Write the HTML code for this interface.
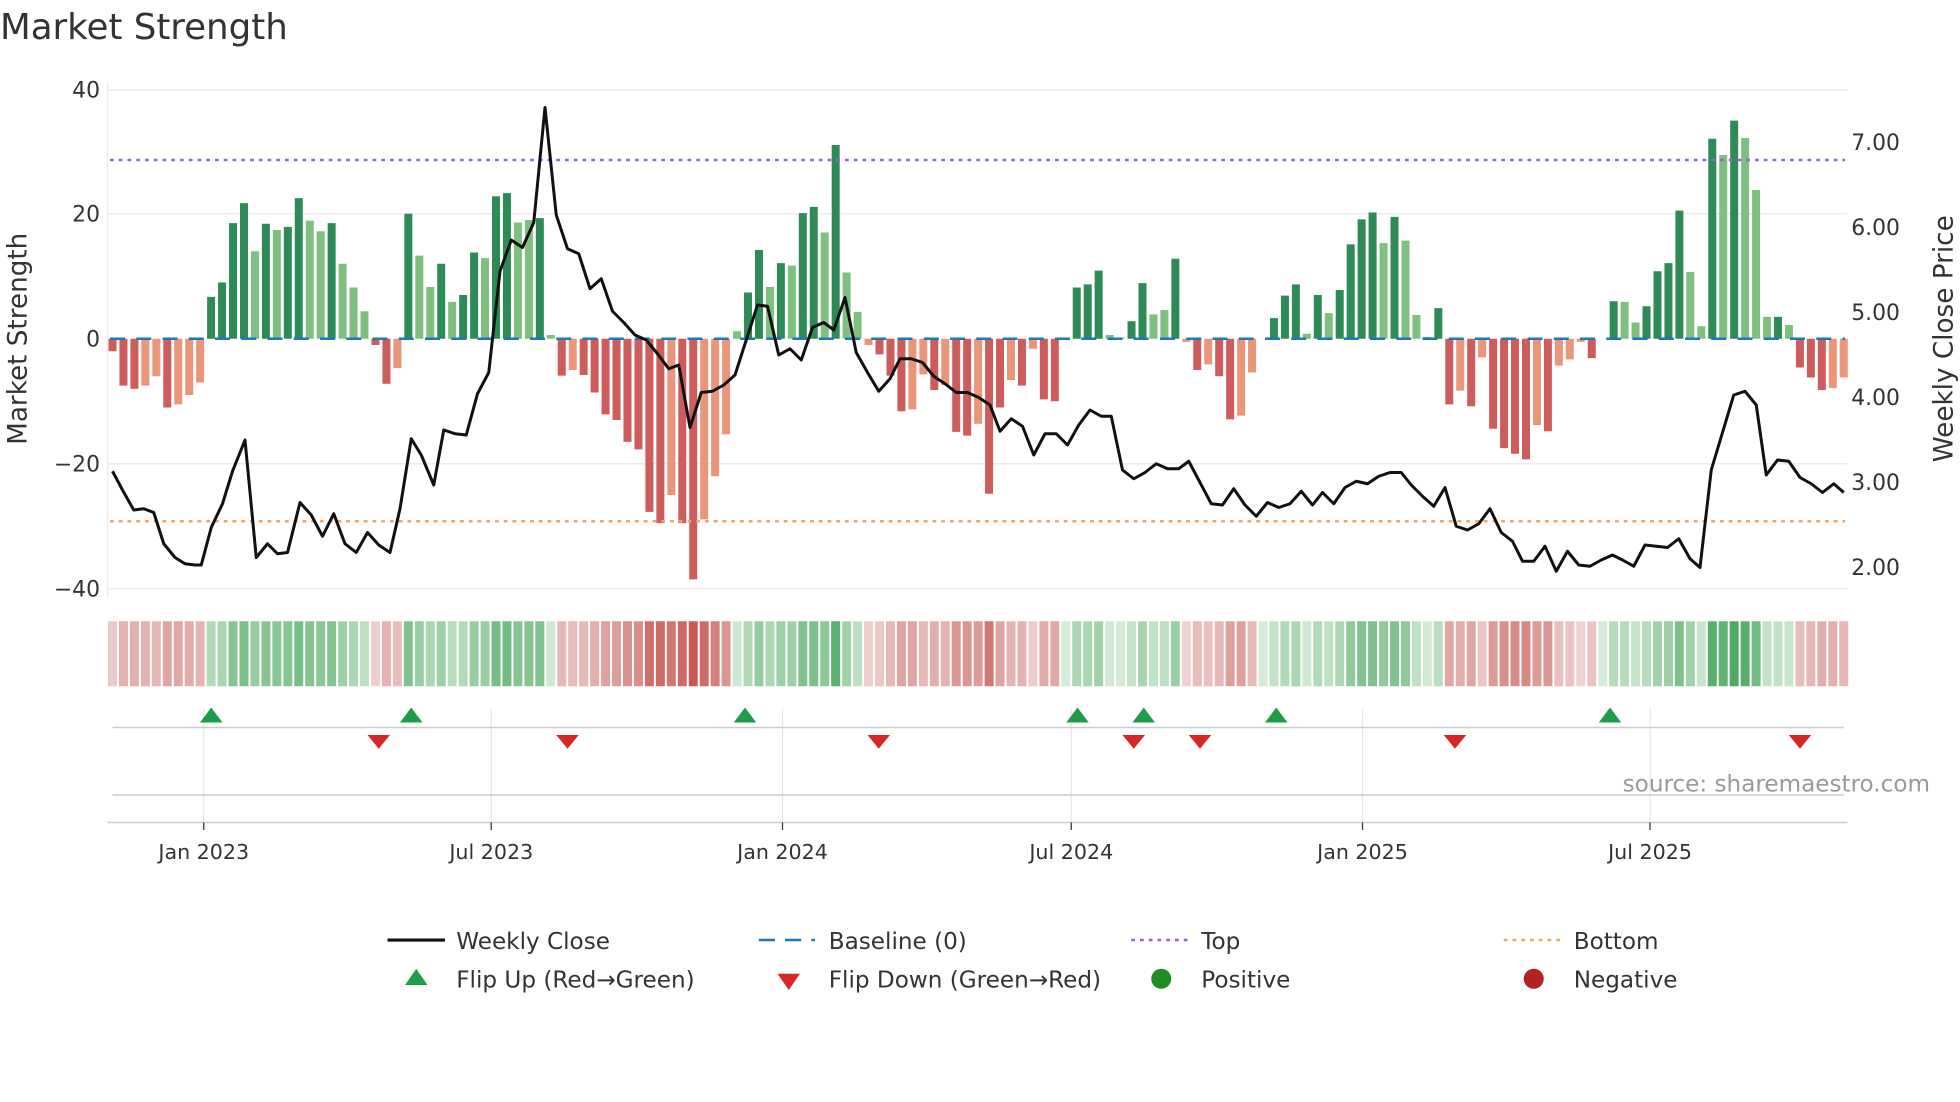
<!DOCTYPE html>
<html><head><meta charset="utf-8"><style>
html,body{margin:0;padding:0;background:#fff;}
svg{display:block;font-family:"DejaVu Sans","Liberation Sans",sans-serif;}
</style></head><body>
<svg id="s" width="1960" height="1102" viewBox="0 0 1568 881.6" xmlns="http://www.w3.org/2000/svg">
<rect width="1568" height="882" fill="#fff"/>
<text x="0" y="31" font-size="28.5" fill="#333">Market Strength</text>
<g stroke="#ececf0" stroke-width="1.2">
<line x1="86" x2="1478" y1="72" y2="72"/><line x1="86" x2="1478" y1="171" y2="171"/>
<line x1="86" x2="1478" y1="371" y2="371"/><line x1="86" x2="1478" y1="471" y2="471"/>
<line x1="86" x2="86" y1="66" y2="478"/>
</g>
<g font-size="17.5" fill="#333" text-anchor="end">
<text x="80" y="78">40</text><text x="80" y="177">20</text><text x="80" y="277">0</text>
<text x="80" y="377">−20</text><text x="80" y="477">−40</text>
</g>
<g font-size="17.5" fill="#333">
<text x="1481" y="120">7.00</text><text x="1481" y="188">6.00</text><text x="1481" y="256">5.00</text>
<text x="1481" y="324">4.00</text><text x="1481" y="392">3.00</text><text x="1481" y="460">2.00</text>
</g>
<text transform="translate(21,271) rotate(-90)" text-anchor="middle" font-size="21" fill="#333">Market Strength</text>
<text transform="translate(1562,271) rotate(-90)" text-anchor="middle" font-size="21" fill="#333">Weekly Close Price</text>
<g id="bars"></g>
<line x1="88" x2="1476" y1="271" y2="271" stroke="#1f77b4" stroke-width="2" stroke-dasharray="12,9"/>
<line x1="88" x2="1476" y1="128" y2="128" stroke="#9b5fd6" stroke-width="2" stroke-dasharray="3,4"/>
<line x1="88" x2="1476" y1="417" y2="417" stroke="#f4a460" stroke-width="2" stroke-dasharray="3,4"/>
<polyline id="price" fill="none" stroke="#111" stroke-width="2.4" stroke-linejoin="round"/>
<g id="heat"></g>
<g stroke="#e6e6e6" stroke-width="1">
<line x1="163" x2="163" y1="567" y2="660"/><line x1="393" x2="393" y1="567" y2="660"/>
<line x1="626" x2="626" y1="567" y2="660"/><line x1="857" x2="857" y1="567" y2="660"/>
<line x1="1090" x2="1090" y1="567" y2="660"/><line x1="1320" x2="1320" y1="567" y2="660"/>
</g>
<line x1="90" x2="1475" y1="582" y2="582" stroke="#ccc" stroke-width="1.2"/>
<line x1="90" x2="1475" y1="636" y2="636" stroke="#ccc" stroke-width="1.2"/>
<line x1="86" x2="1478" y1="658" y2="658" stroke="#ccc" stroke-width="1.2"/>
<g id="flips"></g>
<text x="1544" y="633" text-anchor="end" font-size="18.5" fill="#999">source: sharemaestro.com</text>
<g stroke="#333" stroke-width="1">
<line x1="163" x2="163" y1="658" y2="664"/><line x1="393" x2="393" y1="658" y2="664"/>
<line x1="626" x2="626" y1="658" y2="664"/><line x1="857" x2="857" y1="658" y2="664"/>
<line x1="1090" x2="1090" y1="658" y2="664"/><line x1="1320" x2="1320" y1="658" y2="664"/>
</g>
<g font-size="16.5" fill="#333" text-anchor="middle">
<text x="163" y="687">Jan 2023</text><text x="393" y="687">Jul 2023</text><text x="626" y="687">Jan 2024</text>
<text x="857" y="687">Jul 2024</text><text x="1090" y="687">Jan 2025</text><text x="1320" y="687">Jul 2025</text>
</g>
<g font-size="18.5" fill="#333">
<line x1="310" x2="356" y1="752" y2="752" stroke="#111" stroke-width="2.5"/>
<text x="365" y="759">Weekly Close</text>
<line x1="607" x2="652" y1="752" y2="752" stroke="#1f77b4" stroke-width="2" stroke-dasharray="13,8"/>
<text x="663" y="759">Baseline (0)</text>
<line x1="905" x2="950" y1="752" y2="752" stroke="#9b5fd6" stroke-width="2" stroke-dasharray="3,4"/>
<text x="961" y="759">Top</text>
<line x1="1203" x2="1248" y1="752" y2="752" stroke="#f4a460" stroke-width="2" stroke-dasharray="3,4"/>
<text x="1259" y="759">Bottom</text>
<polygon points="324,788 342,788 333,775" fill="#1e9e4a"/>
<text x="365" y="790">Flip Up (Red→Green)</text>
<polygon points="622,779 640,779 631,792" fill="#d62728"/>
<text x="663" y="790">Flip Down (Green→Red)</text>
<circle cx="929" cy="783" r="8" fill="#228b22"/>
<text x="961" y="790">Positive</text>
<circle cx="1227" cy="783" r="8" fill="#b22222"/>
<text x="1259" y="790">Negative</text>
</g>
</svg>
<script>
(function(){
var V=[-2,"D",-7.5,"D",-8,"D",-7.5,"L",-6,"L",-11,"D",-10.5,"L",-9,"L",-7,"L",
6.7,"D",9,"D",18.5,"D",21.7,"D",14,"L",18.4,"D",17.4,"L",17.9,"D",22.5,"D",18.9,"L",17.2,"L",18.5,"D",12,"L",8.2,"L",4.4,"L",-1,"D",-7.2,"D",-4.7,"L",
20,"D",13.3,"L",8.3,"L",12,"D",5.9,"L",7,"D",13.8,"D",12.9,"L",22.8,"D",23.3,"D",18.6,"L",19,"L",19.3,"D",0.6,"L",
-5.9,"D",-5,"L",-5.8,"D",-8.6,"D",-12.1,"D",-13,"D",-16.5,"D",-17.7,"D",-27.7,"D",-29.5,"D",-25,"L",-29.5,"D",-38.5,"D",-28.9,"L",-22,"L",-15.3,"L",
1.2,"L",7.4,"D",14.2,"D",8.3,"L",12.1,"D",11.7,"L",20.1,"D",21.1,"D",17,"L",31,"D",10.6,"L",4.3,"L",
-1,"L",-2.5,"D",-5.9,"D",-11.6,"D",-11.3,"L",-5.7,"L",-8.2,"D",-7.4,"L",-14.9,"D",-15.5,"D",-13.6,"L",-24.8,"D",-11,"D",-6.6,"L",-7.5,"D",-1.6,"L",-9.7,"D",-10,"D",0,"L",
8.2,"D",8.7,"D",10.9,"D",0.6,"L",0.2,"L",2.8,"D",8.9,"D",3.9,"L",4.6,"L",12.8,"D",
-0.5,"L",-5,"D",-4.1,"L",-6,"D",-12.9,"D",-12.3,"L",-5.4,"L",0,"L",
3.3,"D",6.9,"D",8.7,"D",0.8,"L",7,"D",4.1,"L",7.8,"D",15.1,"D",19.1,"D",20.2,"D",15.3,"L",19.5,"D",15.7,"L",3.8,"L",0.3,"L",4.9,"D",
-10.5,"D",-8.3,"L",-10.8,"D",-3,"L",-14.4,"D",-17.5,"D",-18.4,"D",-19.3,"D",-13.8,"L",-14.8,"D",-4.3,"L",-3.3,"L",-0.5,"L",-3.1,"D",0,"L",
6,"D",5.9,"L",2.6,"L",5.2,"D",10.8,"D",12.1,"D",20.5,"D",10.7,"L",2,"L",32,"D",29.4,"L",34.9,"D",32.1,"L",23.8,"L",3.5,"L",3.5,"D",2.2,"L",
-4.6,"D",-6.2,"D",-8.2,"D",-7.9,"L",-6.2,"L"];
var N=V.length/2,x0=90,x1=1475,dx=(x1-x0)/(N-1),b="",h="";
function mix(a,c,t){return "rgb("+[0,1,2].map(function(i){return Math.round(a[i]+(c[i]-a[i])*t)}).join(",")+")";}
for(var i=0;i<N;i++){var v=V[2*i],s=V[2*i+1],x=x0+i*dx,col;
 if(v>=0)col=s=="D"?"#2e8b57":"#7fbf7f";else col=s=="D"?"#cd5c5c":"#e9967a";
 var yy=271-v*5,ty=Math.min(yy,271),hh=Math.abs(v*5);
 if(hh>0.3)b+='<rect x="'+(x-3.2)+'" y="'+ty+'" width="6.4" height="'+hh+'" fill="'+col+'"/>';
 var t=Math.min(Math.abs(v)/35,1),c;
 if(v>=0)c=mix([214,236,216],[80,170,100],Math.pow(t,0.8));else c=mix([240,214,214],[200,90,85],Math.pow(t,0.8));
 h+='<rect x="'+(x-3.6)+'" y="497" width="7.2" height="52" fill="'+c+'"/>';}
document.getElementById("bars").innerHTML=b;document.getElementById("heat").innerHTML=h;
var P=[90,377,98,392,107,408,115,407,123,410,131,435,140,446,148,451,156,452,161,452,169,422,178,403,186,377,196,352,205,446,214,435,222,443,230,442,240,402,249,412,258,429,267,411,276,435,285,442,294,426,303,436,312,442,320,407,329,351,337,364,347,388,355,344,364,347,373,348,382,315,391,298,400,217,409,192,418,198,427,178,436,86,445,172,454,199,463,203,472,231,481,223,490,249,499,258,508,268,517,272,526,283,535,295,543,292,552,342,561,314,570,313,579,308,588,300,597,272,606,244,614,245,623,284,632,279,641,288,650,262,659,258,667,264,676,238,685,282,694,298,703,313,712,303,720,287,729,287,738,290,747,301,756,307,765,314,774,314,783,318,792,324,800,345,809,335,818,341,827,364,836,347,845,347,854,356,863,340,872,328,881,333,889,333,898,376,907,383,916,378,925,371,934,375,943,375,951,369,960,386,969,403,978,404,987,391,996,404,1005,413,1014,402,1023,406,1032,403,1041,393,1050,404,1058,394,1067,403,1076,390,1085,385,1094,387,1103,381,1112,378,1121,378,1129,388,1138,397,1147,405,1156,390,1165,421,1174,424,1183,419,1192,407,1201,426,1210,433,1218,449,1227,449,1236,437,1245,457,1254,441,1263,452,1272,453,1281,448,1290,444,1298,448,1307,453,1316,436,1325,437,1334,438,1343,431,1352,447,1360,454,1369,376,1378,346,1387,316,1396,313,1405,324,1413,380,1422,368,1431,369,1440,382,1449,387,1458,394,1467,387,1475,394];
var pts=[];for(var i=0;i<P.length;i+=2)pts.push(P[i]+","+P[i+1]);
document.getElementById("price").setAttribute("points",pts.join(" "));
var f="";[169,329,596,862,915,1021,1288].forEach(function(x){f+='<polygon points="'+(x-9)+',578 '+(x+9)+',578 '+x+',566" fill="#1e9e4a"/>';});
[303,454,703,907,960,1164,1440].forEach(function(x){f+='<polygon points="'+(x-9)+',588 '+(x+9)+',588 '+x+',599" fill="#d62728"/>';});
document.getElementById("flips").innerHTML=f;
})();
</script>
</body></html>
